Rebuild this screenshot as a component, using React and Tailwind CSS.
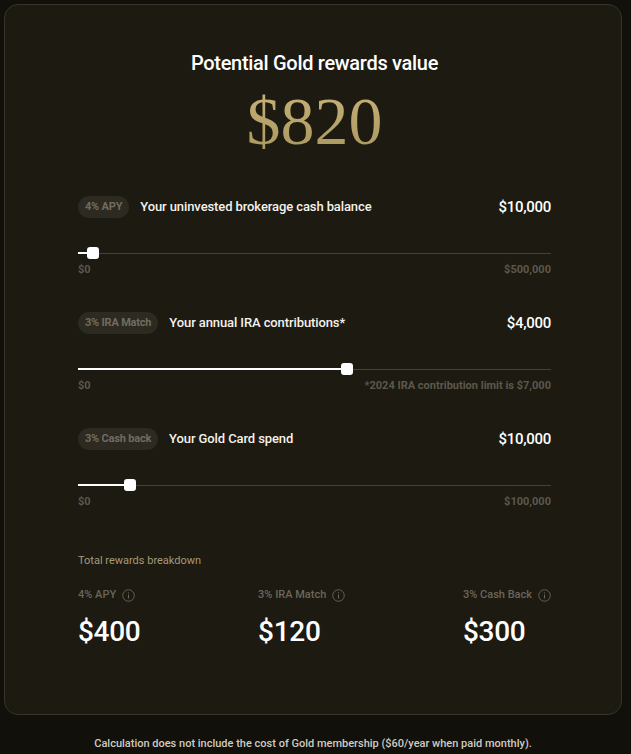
import React from "react";

const SLIDERS = [
  { id: "apy", tag: "4% APY", label: "Your uninvested brokerage cash balance", value: "$10,000", frac: 10000 / 500000, min: "$0", max: "$500,000" },
  { id: "ira", tag: "3% IRA Match", label: "Your annual IRA contributions*", value: "$4,000", frac: 4000 / 7000, min: "$0", max: "*2024 IRA contribution limit is $7,000" },
  { id: "card", tag: "3% Cash back", label: "Your Gold Card spend", value: "$10,000", frac: 10000 / 100000, min: "$0", max: "$100,000" },
];

const BREAKDOWN = [
  { label: "4% APY", value: "$400" },
  { label: "3% IRA Match", value: "$120" },
  { label: "3% Cash Back", value: "$300" },
];

function InfoIcon() {
  return (
    <svg width="13" height="13" viewBox="0 0 14 14" fill="none" className="shrink-0">
      <circle cx="7" cy="7" r="6.2" stroke="#6b665a" strokeWidth="1" />
      <line x1="7" y1="6" x2="7" y2="10.2" stroke="#6b665a" strokeWidth="1.1" />
      <circle cx="7" cy="4.1" r="0.7" fill="#6b665a" />
    </svg>
  );
}

function SliderRow({ item, first }) {
  // thumb stays inside the track, 12px wide
  const left = `calc(${item.frac} * (100% - 12px))`;
  return (
    <div className={first ? "mt-[41px]" : "mt-[35px]"}>
      <div className="flex items-center h-[22px]">
        <span className="h-[22px] px-[7px] flex items-center rounded-full bg-[#2c2a21] text-[#716c60] text-[11px] font-bold tracking-[-0.2px]">
          {item.tag}
        </span>
        <span className="ml-[11px] text-[13px] font-medium text-[#f4f1ea] tracking-[-0.1px]">{item.label}</span>
        <span className="ml-auto text-[15px] font-medium text-white tracking-[-0.3px]">{item.value}</span>
      </div>

      <div className="relative h-[12px] mt-[29px]">
        <div className="absolute left-0 right-0 top-[5.5px] h-px bg-[#45423a]" />
        <div className="absolute left-0 top-[5px] h-[2px] bg-white" style={{ width: `calc(${left} + 6px)` }} />
        <div className="absolute top-0 w-[12px] h-[12px] rounded-[3px] bg-white" style={{ left }} />
      </div>

      <div className="flex justify-between mt-[4px] text-[11px] leading-[14px] font-bold text-[#5c584c]">
        <span>{item.min}</span>
        <span>{item.max}</span>
      </div>
    </div>
  );
}

export default function App() {
  return (
    <div className="min-h-screen bg-[#12100b] pt-[4px] pl-[4px] font-['Roboto',_'Liberation_Sans',_sans-serif]">
      <div className="w-[618px] h-[711px] rounded-[14px] border border-[#37342a] bg-[#1c1a11] pl-[73px] pr-[70px] pt-[44px]">
        <h1 className="text-center text-[20px] leading-[28px] font-medium text-white tracking-[-0.3px]">
          Potential Gold rewards value
        </h1>
        <div className="mt-[10px] text-center text-[68px] leading-[68px] font-['Liberation_Serif',_serif]">
          <span className="bg-gradient-to-b from-[#c9b57a] to-[#a8955c] bg-clip-text text-transparent">$820</span>
        </div>

        {SLIDERS.map((s, i) => (
          <SliderRow key={s.id} item={s} first={i === 0} />
        ))}

        <p className="mt-[44px] text-[11px] leading-[16px] text-[#a69a78]">Total rewards breakdown</p>

        <div className="flex justify-between mt-[18px]">
          {BREAKDOWN.map((b) => (
            <div key={b.label}>
              <div className="flex items-center gap-[6px] h-[16px] text-[11px] font-medium text-[#6b665a]">
                {b.label}
                <InfoIcon />
              </div>
              <div className="mt-[13px] text-[28px] leading-[32px] font-medium text-white tracking-[-0.3px]">{b.value}</div>
            </div>
          ))}
        </div>
      </div>

      <p className="w-[618px] mt-[21px] text-center text-[11px] leading-[16px] font-medium text-[#cfcbc0]">
        Calculation does not include the cost of Gold membership ($60/year when paid monthly).
      </p>
    </div>
  );
}
